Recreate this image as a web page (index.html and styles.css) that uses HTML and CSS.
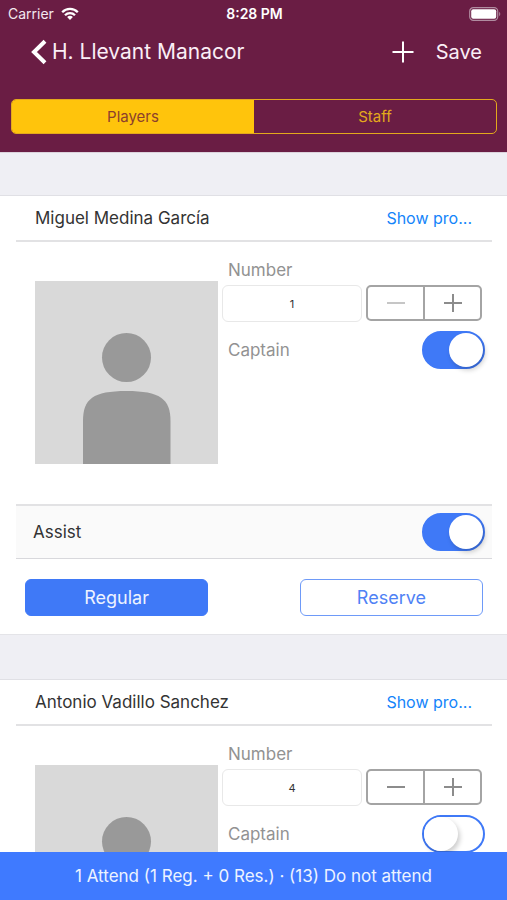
FILE: index.html
```html
<!DOCTYPE html>
<html lang="en">
<head>
<meta charset="utf-8">
<meta name="viewport" content="width=device-width, initial-scale=1">
<title>H. Llevant Manacor</title>
<link rel="stylesheet" href="styles.css">
</head>
<body>
<header class="header">
  <div class="status">
    <span class="carrier">Carrier
      <svg width="18" height="14" viewBox="0 0 18 14" aria-hidden="true"><g fill="none" stroke="#fff" stroke-width="2.3"><path d="M1.2 5.2a11 11 0 0 1 15.6 0"/><path d="M4 8.2a7 7 0 0 1 10 0"/></g><path d="M9 13 6.1 10.1a4.1 4.1 0 0 1 5.8 0z" fill="#fff"/></svg>
    </span>
    <span class="time">8:28 PM</span>
    <svg class="battery" width="32" height="14" viewBox="0 0 32 14" aria-hidden="true"><rect x=".7" y=".7" width="28" height="12.6" rx="3.6" fill="none" stroke="#b08ca0" stroke-width="1.2"/><rect x="2.2" y="2.2" width="25" height="9.6" rx="2" fill="#fff"/><path d="M30.2 4.8c1.4.7 1.4 3.7 0 4.4z" fill="#b08ca0"/></svg>
  </div>
  <nav class="nav">
    <button class="nav-button back" type="button">
      <svg width="16" height="26" viewBox="0 0 16 26" aria-hidden="true"><path d="M14 2.200 3 13l11 10.800" fill="none" stroke="#fff" stroke-width="4"/></svg>
      <span>H. Llevant Manacor</span>
    </button>
    <button class="nav-button" type="button" aria-label="Add">
      <svg width="22" height="22" viewBox="0 0 22 22" aria-hidden="true"><path d="M11 .5v21M.5 11h21" stroke="#fff" stroke-width="2"/></svg>
    </button>
    <button class="nav-button" type="button">Save</button>
  </nav>
  <div class="segments">
    <button class="segment active" type="button">Players</button>
    <button class="segment" type="button">Staff</button>
  </div>
</header>

<main class="list">
  <section class="card">
    <div class="card-head">
      <h2 class="name">Miguel Medina García</h2>
      <a class="profile" href="#">Show pro...</a>
    </div>
    <div class="details">
      <svg class="avatar" viewBox="0 0 183 183" aria-hidden="true"><path fill="#d9d9d9" d="M0 0h183v183H0z"/><circle cx="91.500" cy="76.500" r="24.500" fill="#999"/><path fill="#999" d="M48 183v-43c0-22 10-30 43.500-30s44 8 44 30v43z"/></svg>
      <div class="fields">
        <label class="label" for="number-1">Number</label>
        <div class="number-row">
          <input class="number" id="number-1" type="text" value="1">
          <div class="stepper">
            <button class="step" type="button" aria-label="Decrease" disabled><svg width="20" height="20" viewBox="0 0 20 20"><path d="M1 10h18"/></svg></button>
            <button class="step" type="button" aria-label="Increase"><svg width="20" height="20" viewBox="0 0 20 20"><path d="M1 10h18M10 1v18"/></svg></button>
          </div>
        </div>
        <div class="captain-row">
          <label class="label" for="captain-1">Captain</label>
          <input class="switch" id="captain-1" type="checkbox" checked>
        </div>
      </div>
    </div>
    <div class="assist-row">
      <label for="assist-1">Assist</label>
      <input class="switch" id="assist-1" type="checkbox" checked>
    </div>
    <div class="roles">
      <button class="role active" type="button">Regular</button>
      <button class="role" type="button">Reserve</button>
    </div>
  </section>

  <section class="card">
    <div class="card-head">
      <h2 class="name">Antonio Vadillo Sanchez</h2>
      <a class="profile" href="#">Show pro...</a>
    </div>
    <div class="details">
      <svg class="avatar" viewBox="0 0 183 183" aria-hidden="true"><path fill="#d9d9d9" d="M0 0h183v183H0z"/><circle cx="91.500" cy="76.500" r="24.500" fill="#999"/><path fill="#999" d="M48 183v-43c0-22 10-30 43.500-30s44 8 44 30v43z"/></svg>
      <div class="fields">
        <label class="label" for="number-2">Number</label>
        <div class="number-row">
          <input class="number" id="number-2" type="text" value="4">
          <div class="stepper">
            <button class="step" type="button" aria-label="Decrease"><svg width="20" height="20" viewBox="0 0 20 20"><path d="M1 10h18"/></svg></button>
            <button class="step" type="button" aria-label="Increase"><svg width="20" height="20" viewBox="0 0 20 20"><path d="M1 10h18M10 1v18"/></svg></button>
          </div>
        </div>
        <div class="captain-row">
          <label class="label" for="captain-2">Captain</label>
          <input class="switch" id="captain-2" type="checkbox">
        </div>
      </div>
    </div>
  </section>
</main>

<footer class="summary">1 Attend (1 Reg. + 0 Res.) · (13) Do not attend</footer>
</body>
</html>
```
FILE: styles.css
```css
* {
  box-sizing: border-box;
}

body {
  margin: 0;
  height: 100vh;
  display: flex;
  flex-direction: column;
  background: #efeff4;
  color: #333;
  font-family: Inter, "Liberation Sans", sans-serif;
  font-size: 17px;
  line-height: 24px;
}

button,
input {
  margin: 0;
  padding: 0;
  font: inherit;
}

svg {
  display: block;
}

/* Header */
.header {
  flex: none;
  padding-bottom: 18px;
  border-bottom: 1px solid #dcd3dc;
  background: #6a1d44;
  color: #fff;
}

.status {
  display: grid;
  grid-template-columns: 1fr auto 1fr;
  align-items: center;
  height: 28px;
  padding: 0 6px 0 8px;
  font-size: 14px;
}

.carrier {
  display: flex;
  align-items: center;
  gap: 7px;
  color: #f3e8ef;
}

.time {
  font-size: 14px;
  font-weight: 600;
}

.battery {
  justify-self: end;
}

.nav {
  display: flex;
  align-items: center;
  height: 48px;
  padding: 0 25px 0 31px;
  gap: 22px;
}

.nav-button {
  border: 0;
  background: none;
  color: #fbeef6;
  font-size: 20px;
}

.back {
  display: flex;
  align-items: center;
  gap: 5px;
  margin-right: auto;
  font-size: 21px;
}

.segments {
  display: flex;
  margin: 23px 10px 0 11px;
  border: 1px solid #e3a91c;
  border-radius: 5px;
  overflow: hidden;
}

.segment {
  flex: 1;
  height: 33px;
  border: 0;
  background: none;
  color: #e3a91c;
  font-size: 15px;
}

.segment.active {
  background: #ffc40c;
  color: #8c3f2c;
}

/* Player cards */
.list {
  flex: 1;
  min-height: 0;
  overflow: hidden;
  padding-top: 42px;
}

.card {
  margin-bottom: 44px;
  padding: 0 15px 0 16px;
  border-top: 1px solid #e0e0e5;
  border-bottom: 1px solid #e4e4e8;
  background: #fff;
}

.card-head {
  display: flex;
  align-items: center;
  justify-content: space-between;
  height: 46px;
  padding: 0 20px 0 19px;
  border-bottom: 2px solid #e2e2e4;
}

.name {
  margin: 0;
  font-size: 17px;
  font-weight: 400;
}

.profile {
  color: #1484fa;
  font-size: 16px;
  text-decoration: none;
}

.details {
  display: flex;
  gap: 4px;
  padding: 0 7px 0 19px;
}

.avatar {
  flex: none;
  width: 183px;
  margin: 39px 0 40px;
}

.fields {
  flex: 1;
  min-width: 0;
  padding-top: 16px;
}

.label {
  display: block;
  padding-left: 6px;
  color: #929292;
}

.number-row {
  display: flex;
  gap: 4px;
  margin-top: 3px;
  padding-right: 3px;
}

.number {
  flex: 1;
  min-width: 0;
  height: 37px;
  border: 1px solid #e8e8e8;
  border-radius: 6px;
  background: #fff;
  color: #333;
  font-size: 11px;
  text-align: center;
}

.stepper {
  display: flex;
  width: 116px;
  height: 36px;
  border: 2px solid #a4a4a4;
  border-radius: 5px;
}

.step {
  flex: 1;
  display: flex;
  align-items: center;
  justify-content: center;
  border: 0;
  background: none;
}

.step + .step {
  border-left: 2px solid #a4a4a4;
}

.step path {
  stroke: #8c8c8c;
  stroke-width: 2;
}

.step:disabled path {
  stroke: #c6c6c6;
}

.captain-row {
  display: flex;
  align-items: center;
  justify-content: space-between;
  margin-top: 9px;
}

.switch {
  appearance: none;
  flex: none;
  width: 63px;
  height: 38px;
  padding: 0;
  border: 2px solid #3f79f7;
  border-radius: 19px;
  background: #fff;
}

.switch::before {
  content: "";
  display: block;
  width: 34px;
  height: 34px;
  border-radius: 50%;
  background: #fff;
  box-shadow: 2px 3px 5px rgba(0, 0, 0, 0.2);
}

.switch:checked {
  background: #3f79f7;
}

.switch:checked::before {
  margin-left: auto;
}

.assist-row {
  display: flex;
  align-items: center;
  justify-content: space-between;
  height: 55px;
  padding: 0 7px 0 17px;
  border-top: 2px solid #e2e2e4;
  border-bottom: 1px solid #d8d8dc;
  background: #fafafa;
}

.roles {
  display: flex;
  justify-content: space-between;
  gap: 20px;
  padding: 20px 9px 18px;
}

.role {
  width: 40%;
  height: 37px;
  border: 1px solid #6e9af8;
  border-radius: 6px;
  background: #fff;
  color: #4f82f5;
  font-size: 18px;
}

.role.active {
  border-color: #3f79f7;
  background: #3f79f7;
  color: #edf3ff;
}

/* Attendance summary */
.summary {
  flex: none;
  padding: 12px;
  background: #3f7aff;
  color: #edf3ff;
  text-align: center;
}
```
